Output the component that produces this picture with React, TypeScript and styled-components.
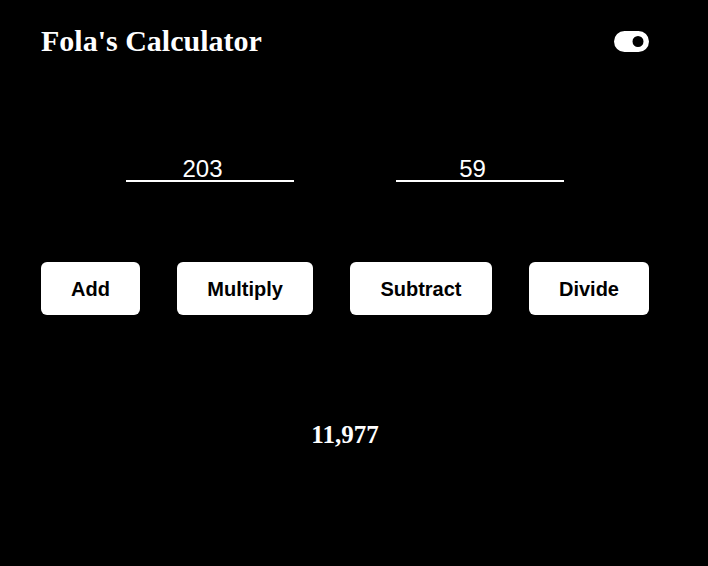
import React, { useState } from "react";
import styled, { createGlobalStyle } from "styled-components";

const GlobalStyle = createGlobalStyle`
  html, body {
    margin: 0;
    padding: 0;
    background: #000;
  }
  body {
    font-family: "Liberation Serif", "Times New Roman", serif;
  }
`;

const Page = styled.div`
  width: 608px;
  margin-left: 41px;
  padding-top: 24px;
  display: flex;
  flex-direction: column;
`;

const Header = styled.header`
  display: flex;
  align-items: center;
  justify-content: space-between;
`;

const Title = styled.h1`
  margin: 0;
  color: #fff;
  font-family: "Liberation Serif", "Times New Roman", serif;
  font-weight: bold;
  font-size: 30px;
`;

const ToggleButton = styled.button`
  background: none;
  border: none;
  padding: 0;
  display: flex;
  cursor: pointer;
`;

const Inputs = styled.div`
  display: flex;
  justify-content: center;
  gap: 102px;
  margin-top: 98px;
`;

const NumberInput = styled.input`
  width: 153px;
  height: 22px;
  padding: 2px 15px 0 0;
  background: transparent;
  border: none;
  border-bottom: 2px solid #fff;
  color: #fff;
  font-family: "Liberation Sans", Arial, sans-serif;
  font-size: 24px;
  text-align: center;
  outline: none;
`;

const Buttons = styled.div`
  display: flex;
  justify-content: space-between;
  margin-top: 80px;
`;

const OpButton = styled.button`
  background: #fff;
  color: #000;
  border: none;
  border-radius: 6px;
  padding: 16px 30px 14px;
  height: 53px;
  font-family: "Liberation Sans", Arial, sans-serif;
  font-weight: bold;
  font-size: 20px;
  cursor: pointer;
`;

const Result = styled.p`
  margin: 106px 0 0;
  text-align: center;
  color: #fff;
  font-family: "Liberation Serif", "Times New Roman", serif;
  font-weight: bold;
  font-size: 25px;
`;

const ToggleIcon = () => (
  <svg width="35" height="21" viewBox="0 0 35 21" aria-hidden="true">
    <path
      fillRule="evenodd"
      fill="#fff"
      d="M10.5 0h14a10.5 10.5 0 0 1 0 21h-14a10.5 10.5 0 0 1 0-21zM24 5a5.5 5.5 0 1 0 0 11a5.5 5.5 0 1 0 0-11z"
    />
  </svg>
);

export default function App() {
  const [a, setA] = useState("203");
  const [b, setB] = useState("59");
  const [result, setResult] = useState(11977);

  const x = parseFloat(a) || 0;
  const y = parseFloat(b) || 0;

  return (
    <>
      <GlobalStyle />
      <Page>
        <Header>
          <Title>Fola's Calculator</Title>
          <ToggleButton aria-label="Toggle theme">
            <ToggleIcon />
          </ToggleButton>
        </Header>
        <Inputs>
          <NumberInput value={a} onChange={(e) => setA(e.target.value)} />
          <NumberInput value={b} onChange={(e) => setB(e.target.value)} />
        </Inputs>
        <Buttons>
          <OpButton onClick={() => setResult(x + y)}>Add</OpButton>
          <OpButton onClick={() => setResult(x * y)}>Multiply</OpButton>
          <OpButton onClick={() => setResult(x - y)}>Subtract</OpButton>
          <OpButton onClick={() => setResult(y ? x / y : 0)}>Divide</OpButton>
        </Buttons>
        <Result>{result.toLocaleString("en-US")}</Result>
      </Page>
    </>
  );
}
